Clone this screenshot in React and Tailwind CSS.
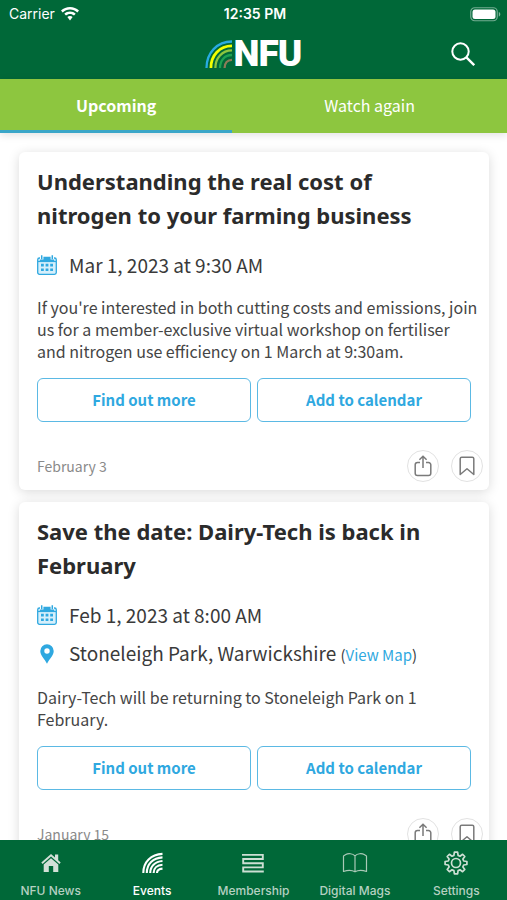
import React, { useState } from 'react';

const events = [
  {
    id: 1,
    title: 'Understanding the real cost of nitrogen to your farming business',
    when: 'Mar 1, 2023 at 9:30 AM',
    description:
      "If you're interested in both cutting costs and emissions, join us for a member-exclusive virtual workshop on fertiliser and nitrogen use efficiency on 1 March at 9:30am.",
    posted: 'February 3',
  },
  {
    id: 2,
    title: 'Save the date: Dairy-Tech is back in February',
    when: 'Feb 1, 2023 at 8:00 AM',
    location: 'Stoneleigh Park, Warwickshire',
    description: 'Dairy-Tech will be returning to Stoneleigh Park on 1 February.',
    posted: 'January 15',
  },
];

const WifiIcon = () => (
  <svg viewBox="0 0 18 14" className="w-[18px] h-[14px]" fill="white">
    <path d="M9 0C5.6 0 2.4 1.3 0 3.6l1.7 1.8C3.7 3.5 6.2 2.4 9 2.4s5.3 1.1 7.3 3L18 3.6C15.6 1.3 12.4 0 9 0z" />
    <path d="M9 4.5c-2.2 0-4.2.85-5.7 2.3L5 8.6c1.1-1 2.5-1.7 4-1.7s2.9.7 4 1.7l1.7-1.8C13.2 5.35 11.2 4.5 9 4.5z" />
    <path d="M9 9c-1 0-1.9.4-2.6 1L9 13.6l2.6-3.6C10.9 9.4 10 9 9 9z" />
  </svg>
);

const BatteryIcon = () => (
  <svg viewBox="0 0 31 15" className="w-[31px] h-[15px]">
    <rect x="0.75" y="0.75" width="26.5" height="13" rx="4" fill="none" stroke="white" strokeOpacity="0.45" strokeWidth="1.2" />
    <rect x="2.5" y="2.5" width="23" height="9.5" rx="2.5" fill="white" />
    <path d="M28.8 5v4.5c1-.4 1.5-1.2 1.5-2.25S29.8 5.4 28.8 5z" fill="white" fillOpacity="0.5" />
  </svg>
);

const RainbowIcon = () => (
  <svg viewBox="0 0 27 28" className="w-[27px] h-[28px]" fill="none" strokeWidth="2.3">
    <path d="M1.5 28C1.5 13 12 1.5 27 1.5" stroke="#29abe2" />
    <path d="M5.9 28C5.9 15.5 14.5 5.9 27 5.9" stroke="#f2ff00" strokeWidth="2.8" />
    <path d="M10.4 28C10.4 18 17 10.4 27 10.4" stroke="#8dc63f" />
    <path d="M15 28C15 20.5 19.5 15 27 15" stroke="#1ea152" />
    <path d="M19.6 28C19.6 23 22.5 19.8 27 19.8" stroke="#8c7b58" />
  </svg>
);

const SearchIcon = () => (
  <svg viewBox="0 0 24 24" className="w-6 h-6" fill="none" stroke="white" strokeWidth="2">
    <circle cx="9.5" cy="9.5" r="8.2" />
    <path d="M15.4 15.4L23.2 23.2" strokeWidth="2.4" />
  </svg>
);

const CalendarIcon = () => (
  <svg viewBox="0 0 20 20" className="w-5 h-5 shrink-0">
    <rect x="0.7" y="3" width="18.6" height="16.3" rx="1.8" fill="#d6effb" stroke="#2fa8e0" strokeWidth="1.3" />
    <path d="M3.5 1.8h13l1 5.2h-15z" fill="#2fa8e0" />
    <path d="M4.7 0v4.5M15.3 0v4.5" stroke="white" strokeWidth="3.4" />
    <path d="M4.7 0.3v4M15.3 0.3v4" stroke="#2fa8e0" strokeWidth="1.5" />
    <path d="M1 6.5h18" stroke="#2fa8e0" strokeWidth="1.2" />
    <path d="M8.6 8.8h2.8v2.6H8.6zM13.2 8.8H16v2.6h-2.8zM4 8.8h2.8v2.6H4zM4 13.5h2.8v2.6H4zM8.6 13.5h2.8v2.6H8.6zM13.2 13.5H16v2.6h-2.8z" fill="#2fa8e0" />
  </svg>
);

const PinIcon = () => (
  <svg viewBox="0 0 20 20" className="w-5 h-5 shrink-0">
    <path d="M10 0.3a6.7 6.7 0 0 0-6.7 6.7c0 4.5 4.3 7.7 6.7 12.7 2.4-5 6.7-8.2 6.7-12.7A6.7 6.7 0 0 0 10 .3zm0 9.4a2.7 2.7 0 1 1 0-5.4 2.7 2.7 0 0 1 0 5.4z" fill="#2fa8e0" />
  </svg>
);

const ShareIcon = () => (
  <svg viewBox="0 0 18 22" className="w-[18px] h-[22px]" fill="none" stroke="#7a7a7a" strokeWidth="1.5">
    <path d="M6 7.5H3.5a2.3 2.3 0 0 0-2.3 2.3v8.4a2.3 2.3 0 0 0 2.3 2.3h11a2.3 2.3 0 0 0 2.3-2.3V9.8a2.3 2.3 0 0 0-2.3-2.3H12" />
    <path d="M9 13V1.5M5.4 4.8L9 1.2l3.6 3.6" />
  </svg>
);

const BookmarkIcon = () => (
  <svg viewBox="0 0 16 20" className="w-4 h-5" fill="none" stroke="#7a7a7a" strokeWidth="1.5" strokeLinejoin="round">
    <path d="M1.2 18.5V2.7c0-.8.7-1.5 1.5-1.5h10.6c.8 0 1.5.7 1.5 1.5v15.8L8 12.8z" />
  </svg>
);

const HomeIcon = () => (
  <svg viewBox="0 0 24 24" className="w-6 h-6" fill="#d3e0d8">
    <path d="M12 3L2.3 11.4l1.3 1.5L12 5.6l8.4 7.3 1.3-1.5-2.5-2.2V3.6h-3.2v2.8z" />
    <path d="M12 7.2l-7.3 6.3V21h5.1v-6h4.4v6h5.1v-7.5z" />
  </svg>
);

const EventsIcon = () => (
  <svg viewBox="0 0 24 24" className="w-6 h-6" fill="none" stroke="white" strokeWidth="2.1">
    <path d="M3.3 22C3.3 11 11 3.4 22.5 2.9" />
    <path d="M6.8 22C6.8 13 13 6.9 22.5 6.4" />
    <path d="M10.2 22C10.2 15.5 15 10.5 22.5 10" />
    <path d="M13.6 22C13.6 17.5 17 14.2 22.5 13.8" />
    <path d="M17 22c0-2.5 2-4.1 5.5-4.4" />
  </svg>
);

const MembershipIcon = () => (
  <svg viewBox="0 0 24 24" className="w-6 h-6" fill="none" stroke="#cddfd4" strokeWidth="1.9">
    <path d="M1 3.9h20.8v4.1H2.2v4.2h19.6v4.2H2.2v4.1h20.6" />
  </svg>
);

const MagsIcon = () => (
  <svg viewBox="0 0 26 24" className="w-[26px] h-6" fill="none" stroke="#a9c9b7" strokeWidth="1.2" strokeLinejoin="round">
    <path d="M13 4.8C10.5 2.3 6 2.2 3.8 3.6L1.5 5v15.5c4-1.5 8.5-1.5 11.5.3 3-1.8 7.5-1.8 11.5-.3V5l-2.3-1.4C20 2.2 15.5 2.3 13 4.8zM13 4.8v15.8" />
  </svg>
);

const SettingsIcon = () => (
  <svg viewBox="0 0 24 24" className="w-6 h-6" fill="none" stroke="#cddfd4" strokeWidth="1.7" strokeLinejoin="round">
    <path d="M10.4 1.2h3.2l.5 3.2 1.9.8 2.6-1.9 2.2 2.2-1.9 2.6.8 1.9 3.2.5v3l-3.2.5-.8 1.9 1.9 2.6-2.2 2.2-2.6-1.9-1.9.8-.5 3.2h-3.2l-.5-3.2-1.9-.8-2.6 1.9-2.2-2.2 1.9-2.6-.8-1.9-3.2-.5v-3l3.2-.5.8-1.9-1.9-2.6 2.2-2.2L8 5.2l1.9-.8z" />
    <circle cx="12" cy="12" r="4.5" />
  </svg>
);

const tabs = [
  { label: 'NFU News', icon: <HomeIcon /> },
  { label: 'Events', icon: <EventsIcon />, active: true },
  { label: 'Membership', icon: <MembershipIcon /> },
  { label: 'Digital Mags', icon: <MagsIcon /> },
  { label: 'Settings', icon: <SettingsIcon /> },
];

const EventCard = ({ event }) => {
  const actionClass =
    'flex-1 h-11 rounded-md border border-[#5bb9e4] text-[15px] leading-5 font-bold text-[#2fa8e0]';
  const roundClass = 'flex items-center justify-center w-8 h-8 rounded-full border border-[#e2e2e2]';

  return (
    <article className="rounded-md bg-white px-[18px] pt-3 pb-2 shadow-[0_2px_12px_rgba(0,0,0,0.15)]">
      <h2 className="font-['Noto_Sans',sans-serif] text-[22px] leading-[34px] font-bold text-[#2b2b2b]">{event.title}</h2>

      <div className="mt-[18px] flex flex-col gap-2 text-[19px] leading-[30px] text-[#3a3a3a]">
        <div className="flex items-center gap-3">
          <CalendarIcon />
          <span>{event.when}</span>
        </div>
        {event.location && (
          <div className="flex items-center gap-3">
            <PinIcon />
            <span>
              {event.location}{' '}
              <span className="text-[15px]">
                (<a href="#map" className="text-[#2fa8e0]">View Map</a>)
              </span>
            </span>
          </div>
        )}
      </div>

      <p className="mt-4 -mr-2 text-[16px] leading-[22px] text-[#454545]">{event.description}</p>

      <div className="mt-4 flex gap-[6px]">
        <button type="button" className={actionClass}>Find out more</button>
        <button type="button" className={actionClass}>Add to calendar</button>
      </div>

      <div className="mt-7 -mr-3 flex items-center justify-between">
        <span className="text-sm text-[#8a8a8a]">{event.posted}</span>
        <div className="flex gap-3">
          <button type="button" aria-label="Share" className={roundClass}><ShareIcon /></button>
          <button type="button" aria-label="Bookmark" className={roundClass}><BookmarkIcon /></button>
        </div>
      </div>
    </article>
  );
};

const App = () => {
  const [view, setView] = useState('upcoming');

  return (
    <div className="flex flex-col h-screen bg-white font-['Noto_Sans_CJK_SC','Noto_Sans',sans-serif]">
      <header className="shrink-0 bg-[#006838] text-white">
        <div className="grid grid-cols-3 items-center h-7 pl-[9px] pr-[6px] font-['Inter',sans-serif] text-[14px] leading-5">
          <div className="flex items-center gap-[6px]">
            <span>Carrier</span>
            <WifiIcon />
          </div>
          <span className="text-center font-semibold">12:35 PM</span>
          <div className="flex justify-end"><BatteryIcon /></div>
        </div>
        <div className="grid grid-cols-3 items-center h-[51px] px-8">
          <div />
          <div className="flex items-center justify-center gap-px">
            <RainbowIcon />
            <span className="font-['Roboto',sans-serif] text-[37px] leading-9 font-black tracking-tight">NFU</span>
          </div>
          <button type="button" aria-label="Search" className="justify-self-end"><SearchIcon /></button>
        </div>
      </header>

      <div className="flex shrink-0 h-[54px] bg-[#8dc63f] text-[16px] text-white shadow-[0_2px_8px_rgba(0,0,0,0.12)]">
        <button
          type="button"
          onClick={() => setView('upcoming')}
          className={`flex-11 border-b-3 ${view === 'upcoming' ? 'font-bold border-[#3aa6c8]' : 'border-transparent'}`}
        >
          Upcoming
        </button>
        <button
          type="button"
          onClick={() => setView('again')}
          className={`flex-13 border-b-3 ${view === 'again' ? 'font-bold border-[#3aa6c8]' : 'border-transparent'}`}
        >
          Watch again
        </button>
      </div>

      <main className="flex flex-col flex-1 min-h-0 gap-3 overflow-y-auto pl-[19px] pr-[18px] pt-[19px] [scrollbar-width:none]">
        {events.map((event) => (
          <EventCard key={event.id} event={event} />
        ))}
      </main>

      <nav className="grid grid-cols-5 shrink-0 h-[60px] bg-[#006838] font-['Inter',sans-serif] text-[12px] leading-4 font-medium">
        {tabs.map((tab) => (
          <a
            key={tab.label}
            href="#"
            className={`flex flex-col items-center pt-[11px] gap-2 ${tab.active ? 'text-white' : 'text-[#b5d0c1]'}`}
          >
            {tab.icon}
            <span>{tab.label}</span>
          </a>
        ))}
      </nav>
    </div>
  );
};

export default App;
